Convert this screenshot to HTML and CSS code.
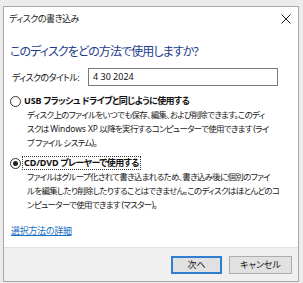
FILE: index.html
```html
<!DOCTYPE html>
<html lang="ja">
<head>
<meta charset="utf-8">
<link rel="stylesheet" href="styles.css">
</head>
<body>
<div class="dialog">
  <div class="titlebar">
    <span class="title">ディスクの書き込み</span>
    <svg class="close" width="10" height="10" viewBox="0 0 10 10"><path d="M0.5 0.5 L9.5 9.5 M9.5 0.5 L0.5 9.5" stroke="#222" stroke-width="1" fill="none"/></svg>
  </div>
  <div class="content">
    <div class="heading">このディスクをどの方法で使用しますか?</div>
    <div class="title-row">
      <span class="label">ディスクのタイトル:</span>
      <div class="input">4 30 2024</div>
    </div>
    <div class="option">
      <div class="option-head">
        <span class="radio"></span>
        <span class="opt-label"><span class="latin">USB</span> フラッシュ ドライブと同じように使用する</span>
      </div>
      <div class="desc">
        <div>ディスク上のファイルをいつでも保存、編集、および削除できます。このディ</div>
        <div>スクは <span class="latin">Windows XP</span> 以降を実行するコンピューターで使用できます (ライ</div>
        <div>ブ ファイル システム)。</div>
      </div>
    </div>
    <div class="option second">
      <div class="option-head">
        <span class="radio checked"></span>
        <span class="opt-label focus"><span class="latin">CD/DVD</span> プレーヤーで使用する</span>
      </div>
      <div class="desc">
        <div>ファイルはグループ化されて書き込まれるため、書き込み後に個別のファイ</div>
        <div>ルを編集したり削除したりすることはできません。このディスクはほとんどのコ</div>
        <div>ンピューターで使用できます (マスター)。</div>
      </div>
    </div>
    <a class="link" href="#">選択方法の詳細</a>
  </div>
  <div class="footer">
    <button class="btn primary">次へ</button>
    <button class="btn">キャンセル</button>
  </div>
</div>
</body>
</html>
```

FILE: styles.css
```css
html, body {
  margin: 0;
  padding: 0;
}
body {
  width: 303px;
  height: 283px;
  background: #ececec;
  font-family: "Noto Sans", "Noto Sans CJK JP", sans-serif;
  font-feature-settings: "palt";
  color: #111;
  overflow: hidden;
}
.dialog {
  box-sizing: border-box;
  margin: 6px 4px 0 3px;
  width: 296px;
  height: 276px;
  border: 1px solid #a8a8a8;
  background: #fff;
  display: flex;
  flex-direction: column;
}
.titlebar {
  height: 23px;
  display: flex;
  align-items: center;
  justify-content: space-between;
  padding: 0 7px 0 5px;
  flex: none;
}
.title {
  font-size: 9px;
  letter-spacing: -0.5px;
  color: #222;
}
.close {
  display: block;
}
.content {
  flex: 1;
  padding: 0 0 0 6px;
  display: flex;
  flex-direction: column;
}
.heading {
  margin-top: 13px;
  font-size: 12px;
  letter-spacing: -0.9px;
  line-height: 17px;
  color: #1c3c8c;
}
.title-row {
  margin-top: 8px;
  display: flex;
  align-items: center;
  height: 18px;
}
.label {
  font-size: 9px;
  letter-spacing: -0.6px;
  padding-left: 2px;
  width: 76px;
  white-space: nowrap;
}
.input {
  box-sizing: border-box;
  width: 190px;
  height: 18px;
  border: 1px solid #7a7a7a;
  font-size: 9px;
  line-height: 16px;
  padding-left: 4px;
  color: #111;
}
.option {
  margin-top: 8px;
}
.option.second {
  margin-top: 6px;
}
.option-head {
  display: flex;
  align-items: center;
  height: 14px;
}
.radio {
  box-sizing: border-box;
  width: 11px;
  height: 11px;
  border: 1px solid #333;
  border-radius: 50%;
  margin-right: 2px;
  position: relative;
  flex: none;
}
.radio.checked::after {
  content: "";
  position: absolute;
  left: 2px;
  top: 2px;
  width: 5px;
  height: 5px;
  border-radius: 50%;
  background: #222;
}
.opt-label {
  font-size: 9px;
  letter-spacing: -0.6px;
  font-weight: 700;
  color: #111;
  line-height: 12px;
  padding: 0 1px;
  white-space: nowrap;
}
.opt-label.focus {
  outline: 1px dotted #333;
}
.latin {
  letter-spacing: -0.1px;
}
.desc {
  padding-left: 17px;
  font-size: 8.5px;
  letter-spacing: -0.7px;
  line-height: 14px;
  white-space: nowrap;
  color: #222;
}
.link {
  margin-top: 12px;
  align-self: flex-start;
  font-size: 9px;
  letter-spacing: -0.3px;
  color: #1a6fc4;
  text-decoration: underline;
  padding-left: 1px;
}
.footer {
  flex: none;
  height: 34px;
  box-sizing: border-box;
  border-top: 1px solid #e3e3e3;
  background: #f0f0f0;
  display: flex;
  justify-content: flex-end;
  align-items: flex-start;
  padding: 8px 6px 0 0;
  gap: 7px;
}
.btn {
  box-sizing: border-box;
  height: 18px;
  font-family: "Noto Sans", "Noto Sans CJK JP", sans-serif;
  font-feature-settings: "palt";
  font-size: 9px;
  background: #e1e1e1;
  border: 1px solid #adadad;
  color: #111;
  padding: 0;
  width: 63px;
  line-height: 16px;
}
.btn.primary {
  width: 51px;
  border: 2px solid #2f7ed0;
  line-height: 14px;
}
```
